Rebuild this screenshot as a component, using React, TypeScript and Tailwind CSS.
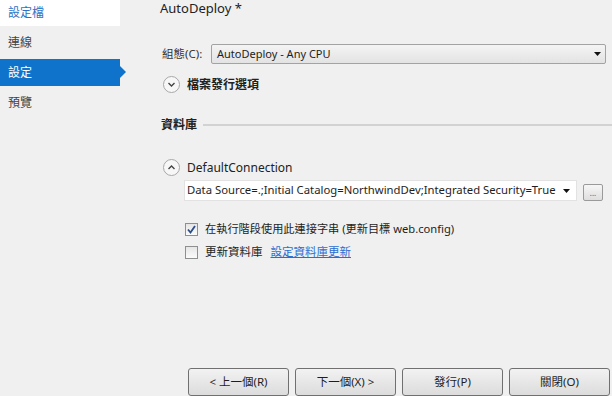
import React from "react";

const FONT = { fontFamily: '"Segoe UI", "Noto Sans", "Noto Sans CJK TC", sans-serif' };

const NAV = [
  { label: "設定檔", state: "current" },
  { label: "連線", state: "" },
  { label: "設定", state: "active" },
  { label: "預覽", state: "" },
];

const Expander = ({ open }: { open: boolean }) => (
  <span className="flex h-[17px] w-[17px] items-center justify-center rounded-full border border-[#a8a8a8] bg-[#f7f7f7]">
    <svg width="9" height="9" viewBox="0 0 9 9">
      <path
        d={open ? "M1.5 6 L4.5 3 L7.5 6" : "M1.5 3 L4.5 6 L7.5 3"}
        fill="none"
        stroke="#444"
        strokeWidth="1.4"
      />
    </svg>
  </span>
);

const Caret = () => (
  <svg width="7" height="4" viewBox="0 0 7 4" className="shrink-0">
    <path d="M0 0 H7 L3.5 4 Z" fill="#111" />
  </svg>
);

const Check = ({ checked }: { checked: boolean }) => (
  <span className="flex h-[13px] w-[13px] items-center justify-center border border-[#8e8f8f] bg-gradient-to-b from-[#e6e6e6] to-[#fbfbfb]">
    {checked && (
      <svg width="9" height="9" viewBox="0 0 9 9">
        <path d="M1 4.5 L3.5 7.5 L8 1" fill="none" stroke="#2b4d8a" strokeWidth="1.8" />
      </svg>
    )}
  </span>
);

const WizardButton = ({ label }: { label: string }) => (
  <button className="flex h-[28px] w-[101px] items-center justify-center rounded-[3px] border border-[#707070] bg-gradient-to-b from-[#f2f2f2] to-[#dcdcdc] text-[11.5px] text-[#1e1e1e]">
    {label}
  </button>
);

export default function App() {
  return (
    <div
      className="flex h-[396px] w-[612px] overflow-hidden bg-[#f0f0f0] text-[#1e1e1e]"
      style={FONT}
    >
      {/* left nav */}
      <div className="flex w-[120px] flex-col gap-[3px]">
        {NAV.map((item) => (
          <div
            key={item.label}
            className={
              item.state === "current"
                ? "flex h-[26px] items-center bg-white pl-[8px] text-[12px] text-[#2b72c4]"
                : item.state === "active"
                ? "relative flex h-[27px] items-center bg-[#0f73cc] pl-[8px] text-[12px] text-white"
                : "flex h-[27px] items-center pl-[8px] text-[12px] text-[#444]"
            }
          >
            {item.label}
            {item.state === "active" && (
              <span className="absolute right-[-6px] top-[7px] h-0 w-0 border-y-[6px] border-l-[6px] border-y-transparent border-l-[#0f73cc]" />
            )}
          </div>
        ))}
      </div>

      {/* main */}
      <div className="ml-[40px] flex flex-1 flex-col">
        <div className="h-[16px] pt-[1px] text-[13px] leading-[14px] text-[#222]">AutoDeploy *</div>

        <div className="mt-[28px] flex h-[20px] items-center">
          <span className="w-[51px] pl-[2px] text-[11.5px] text-[#333]">組態(C):</span>
          <div className="flex h-[20px] w-[395px] items-center justify-between rounded-[2px] border border-[#a3a3a3] bg-gradient-to-b from-[#f4f4f4] to-[#e3e3e3] pl-[5px] pr-[4px] text-[11px]">
            <span>AutoDeploy - Any CPU</span>
            <Caret />
          </div>
        </div>

        <div className="mt-[12px] flex h-[17px] items-center gap-[7px] pl-[3px]">
          <Expander open={false} />
          <span className="text-[12px] font-bold text-[#222]">檔案發行選項</span>
        </div>

        <div className="mt-[24px] flex h-[16px] items-center gap-[6px] pl-[1px]">
          <span className="text-[12px] font-bold text-[#222]">資料庫</span>
          <span className="h-[2px] flex-1 bg-[#d2d2d2]" />
        </div>

        <div className="mt-[26px] flex h-[17px] items-center gap-[7px] pl-[3px]">
          <Expander open={true} />
          <span className="text-[12px] text-[#222]">DefaultConnection</span>
        </div>

        <div className="ml-[24px] mt-[4px] flex h-[21px] items-center gap-[6px]">
          <div className="flex h-[21px] w-[393px] items-center justify-between border border-[#e2e2e2] bg-white pl-[2px] pr-[6px] text-[11.3px]">
            <span className="whitespace-nowrap">
              Data Source=.;Initial Catalog=NorthwindDev;Integrated Security=True
            </span>
            <Caret />
          </div>
          <button className="mt-[3px] flex h-[17px] w-[20px] items-end justify-center rounded-[2px] border border-[#9a9a9a] bg-gradient-to-b from-[#f6f6f6] to-[#dedede] pb-[3px] text-[8px] leading-none text-[#555]">
            ...
          </button>
        </div>

        <div className="ml-[25px] mt-[20px] flex h-[16px] items-center gap-[7px] text-[11.2px]">
          <Check checked={true} />
          <span>在執行階段使用此連接字串 (更新目標 web.config)</span>
        </div>

        <div className="ml-[25px] mt-[7px] flex h-[16px] items-center gap-[7px] text-[11.5px]">
          <Check checked={false} />
          <span>更新資料庫</span>
          <a className="ml-[1px] text-[#2a6fd0] underline">設定資料庫更新</a>
        </div>

        <div className="mt-auto flex justify-end gap-[6px] pr-[2px]">
          <WizardButton label="< 上一個(R)" />
          <WizardButton label="下一個(X) >" />
          <WizardButton label="發行(P)" />
          <WizardButton label="關閉(O)" />
        </div>
      </div>
    </div>
  );
}
